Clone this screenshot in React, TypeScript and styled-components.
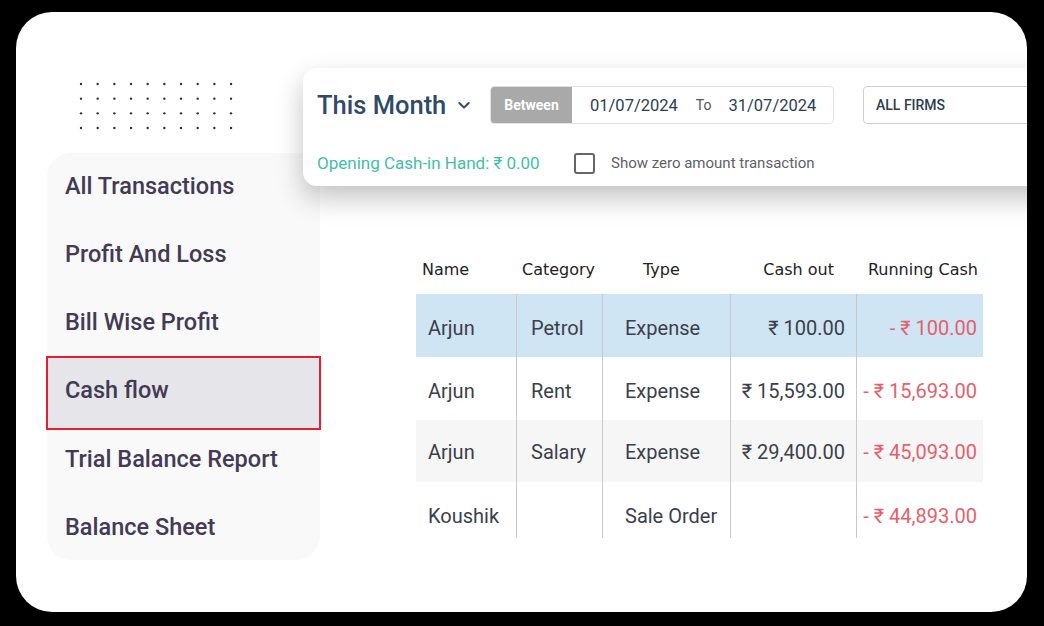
import React from "react";
import styled, { createGlobalStyle } from "styled-components";

const Global = createGlobalStyle`
  html, body { margin: 0; padding: 0; background: #000; }
  body { font-family: Roboto, "Noto Sans", sans-serif; }
  * { box-sizing: border-box; }
`;

const Card = styled.div`
  margin: 12px 0 0 16px;
  width: 1011px;
  height: 600px;
  background: #fff;
  border-radius: 36px;
  overflow: hidden;
  display: flex;
`;

const LeftCol = styled.div`
  width: 304px;
  flex: none;
  padding-left: 31px;
  display: flex;
  flex-direction: column;
`;

const Dots = styled.svg`
  display: block;
  margin: 70px 0 0 32px;
`;

const Sidebar = styled.nav`
  margin-top: 23px;
  width: 273px;
  height: 407px;
  background: #f9f9f9;
  border-radius: 24px;
  display: flex;
  flex-direction: column;
`;

const MenuItem = styled.div<{ $active?: boolean }>`
  flex: none;
  height: ${(p) => (p.$active ? "74px" : "68px")};
  display: flex;
  align-items: center;
  padding-left: ${(p) => (p.$active ? "17px" : "18px")};
  padding-bottom: ${(p) => (p.$active ? "6px" : "0")};
  margin: ${(p) => (p.$active ? "0 -1px -5px -1px" : "0")};
  background: ${(p) => (p.$active ? "#e5e5ea" : "transparent")};
  border: ${(p) => (p.$active ? "2px solid #e3202f" : "none")};
  font-family: Roboto, sans-serif;
  font-weight: 500;
  font-size: 23.5px;
  color: #433a55;
  &:first-child { margin-top: -1px; }
`;

const RightCol = styled.div`
  flex: 1;
  margin-left: -17px;
  position: relative;
  z-index: 1;
  display: flex;
  flex-direction: column;
  min-width: 0;
`;

const Panel = styled.div`
  margin-top: 56px;
  width: calc(100% + 60px);
  height: 118px;
  background: #fff;
  border-radius: 14px;
  box-shadow: 0 12px 28px rgba(0, 0, 0, 0.24);
  padding: 18px 0 0 14px;
  display: flex;
  flex-direction: column;
  gap: 28px;
`;

const TopLine = styled.div`
  display: flex;
  align-items: center;
  height: 38px;
  & > * { flex: none; }
`;

const PeriodSelect = styled.div`
  display: flex;
  align-items: center;
  gap: 10px;
  font-family: Roboto, sans-serif;
  font-size: 25.5px;
  font-weight: 500;
  color: #2e4a66;
  width: 173px;
`;

const DateGroup = styled.div`
  display: flex;
  align-items: center;
  height: 38px;
  width: 344px;
  border: 1px solid #e2e2e2;
  border-radius: 4px;
  overflow: hidden;
  & > * { flex: none; }
`;

const BetweenTag = styled.div`
  width: 81px;
  height: 100%;
  background: #a9a9a9;
  color: #fff;
  font-weight: 700;
  font-size: 14px;
  display: flex;
  align-items: center;
  justify-content: center;
`;

const DateText = styled.span<{ $muted?: boolean }>`
  font-size: ${(p) => (p.$muted ? "14px" : "16.5px")};
  color: ${(p) => (p.$muted ? "#555" : "#2c3e50")};
  margin-left: 18px;
  &:last-child { margin-left: 17px; }
`;

const FirmSelect = styled.div`
  margin-left: 29px;
  height: 38px;
  width: 260px;
  border: 1px solid #cfcfcf;
  border-radius: 4px;
  display: flex;
  align-items: center;
  padding-left: 12px;
  font-size: 14px;
  font-weight: 500;
  color: #2c3e50;
`;

const BottomLine = styled.div`
  display: flex;
  align-items: center;
  height: 22px;
  & > * { flex: none; }
`;

const Opening = styled.span`
  font-size: 17px;
  color: #3fbfa4;
  width: 257px;
`;

const Check = styled.span`
  width: 21px;
  height: 21px;
  border: 2px solid #666;
  border-radius: 3px;
  background: #fff;
`;

const CheckLabel = styled.span`
  margin-left: 16px;
  font-size: 15px;
  color: #5f5f66;
`;

const Table = styled.div`
  margin: 68px 0 0 113px;
  width: 567px;
`;

const cols = "100px 86px 128px 126px 127px";

const HeadRow = styled.div`
  display: grid;
  grid-template-columns: ${cols};
  height: 30px;
  margin-bottom: 10px;
  align-items: center;
`;

const HeadCell = styled.div<{ $align: string; $pad: string }>`
  font-family: "DejaVu Sans", sans-serif;
  font-size: 16px;
  color: #222;
  text-align: ${(p) => p.$align};
  padding: ${(p) => p.$pad};
  white-space: nowrap;
`;

const Row = styled.div<{ $bg: string; $h: number; $top: number }>`
  display: grid;
  grid-template-columns: ${cols};
  height: ${(p) => p.$h}px;
  background: ${(p) => p.$bg};
  & > div { padding-top: ${(p) => p.$top}px; }
`;

const Cell = styled.div<{ $align: string; $pad: string; $red?: boolean; $line?: boolean }>`
  display: flex;
  align-items: center;
  justify-content: ${(p) => (p.$align === "right" ? "flex-end" : "flex-start")};
  padding-left: ${(p) => (p.$align === "right" ? "0" : p.$pad)};
  padding-right: ${(p) => (p.$align === "right" ? p.$pad : "0")};
  border-left: ${(p) => (p.$line ? "1px solid #c9c9c9" : "none")};
  font-family: Roboto, "Noto Sans", sans-serif;
  font-size: 20px;
  color: ${(p) => (p.$red ? "#e65f6b" : "#3b3f4a")};
  white-space: nowrap;
`;

const headers = [
  { t: "Name", a: "left", p: "0 0 0 6px" },
  { t: "Category", a: "left", p: "0 0 0 6px" },
  { t: "Type", a: "left", p: "0 0 0 41px" },
  { t: "Cash out", a: "right", p: "0 22px 0 0" },
  { t: "Running Cash", a: "right", p: "0 5px 0 0" },
];

const pads = ["12px", "14px", "22px", "11px", "6px"];
const aligns = ["left", "left", "left", "right", "right"];

const rows = [
  { bg: "#cfe5f3", h: 63, top: 4, d: ["Arjun", "Petrol", "Expense", "₹ 100.00", "- ₹ 100.00"] },
  { bg: "#ffffff", h: 63, top: 4, d: ["Arjun", "Rent", "Expense", "₹ 15,593.00", "- ₹ 15,693.00"] },
  { bg: "#f6f6f6", h: 62, top: 2, d: ["Arjun", "Salary", "Expense", "₹ 29,400.00", "- ₹ 45,093.00"] },
  { bg: "#ffffff", h: 56, top: 12, d: ["Koushik", "", "Sale Order", "", "- ₹ 44,893.00"] },
];

const menu = [
  "All Transactions",
  "Profit And Loss",
  "Bill Wise Profit",
  "Cash flow",
  "Trial Balance Report",
  "Balance Sheet",
];

const DotGrid = () => {
  const dots = [];
  for (let r = 0; r < 4; r++)
    for (let c = 0; c < 10; c++)
      dots.push(<circle key={`${r}-${c}`} cx={2 + c * 16.67} cy={2 + r * 14.67} r={1.2} fill="#333" />);
  return (
    <Dots width="156" height="48" viewBox="0 0 156 48">
      {dots}
    </Dots>
  );
};

const Chevron = () => (
  <svg width="16" height="16" viewBox="0 0 24 24" fill="none" stroke="#2e4a66" strokeWidth="3" strokeLinecap="round" strokeLinejoin="round">
    <path d="M5 9l7 7 7-7" />
  </svg>
);

export default function App() {
  return (
    <>
      <Global />
      <Card>
        <LeftCol>
          <DotGrid />
          <Sidebar>
            {menu.map((m) => (
              <MenuItem key={m} $active={m === "Cash flow"}>
                {m}
              </MenuItem>
            ))}
          </Sidebar>
        </LeftCol>
        <RightCol>
          <Panel>
            <TopLine>
              <PeriodSelect>
                This Month <Chevron />
              </PeriodSelect>
              <DateGroup>
                <BetweenTag>Between</BetweenTag>
                <DateText>01/07/2024</DateText>
                <DateText $muted>To</DateText>
                <DateText>31/07/2024</DateText>
              </DateGroup>
              <FirmSelect>ALL FIRMS</FirmSelect>
            </TopLine>
            <BottomLine>
              <Opening>Opening Cash-in Hand: ₹ 0.00</Opening>
              <Check />
              <CheckLabel>Show zero amount transaction</CheckLabel>
            </BottomLine>
          </Panel>
          <Table>
            <HeadRow>
              {headers.map((h) => (
                <HeadCell key={h.t} $align={h.a} $pad={h.p}>
                  {h.t}
                </HeadCell>
              ))}
            </HeadRow>
            {rows.map((r, i) => (
              <Row key={i} $bg={r.bg} $h={r.h} $top={r.top}>
                {r.d.map((v, j) => (
                  <Cell key={j} $align={aligns[j]} $pad={pads[j]} $red={j === 4} $line={j > 0}>
                    {v}
                  </Cell>
                ))}
              </Row>
            ))}
          </Table>
        </RightCol>
      </Card>
    </>
  );
}
